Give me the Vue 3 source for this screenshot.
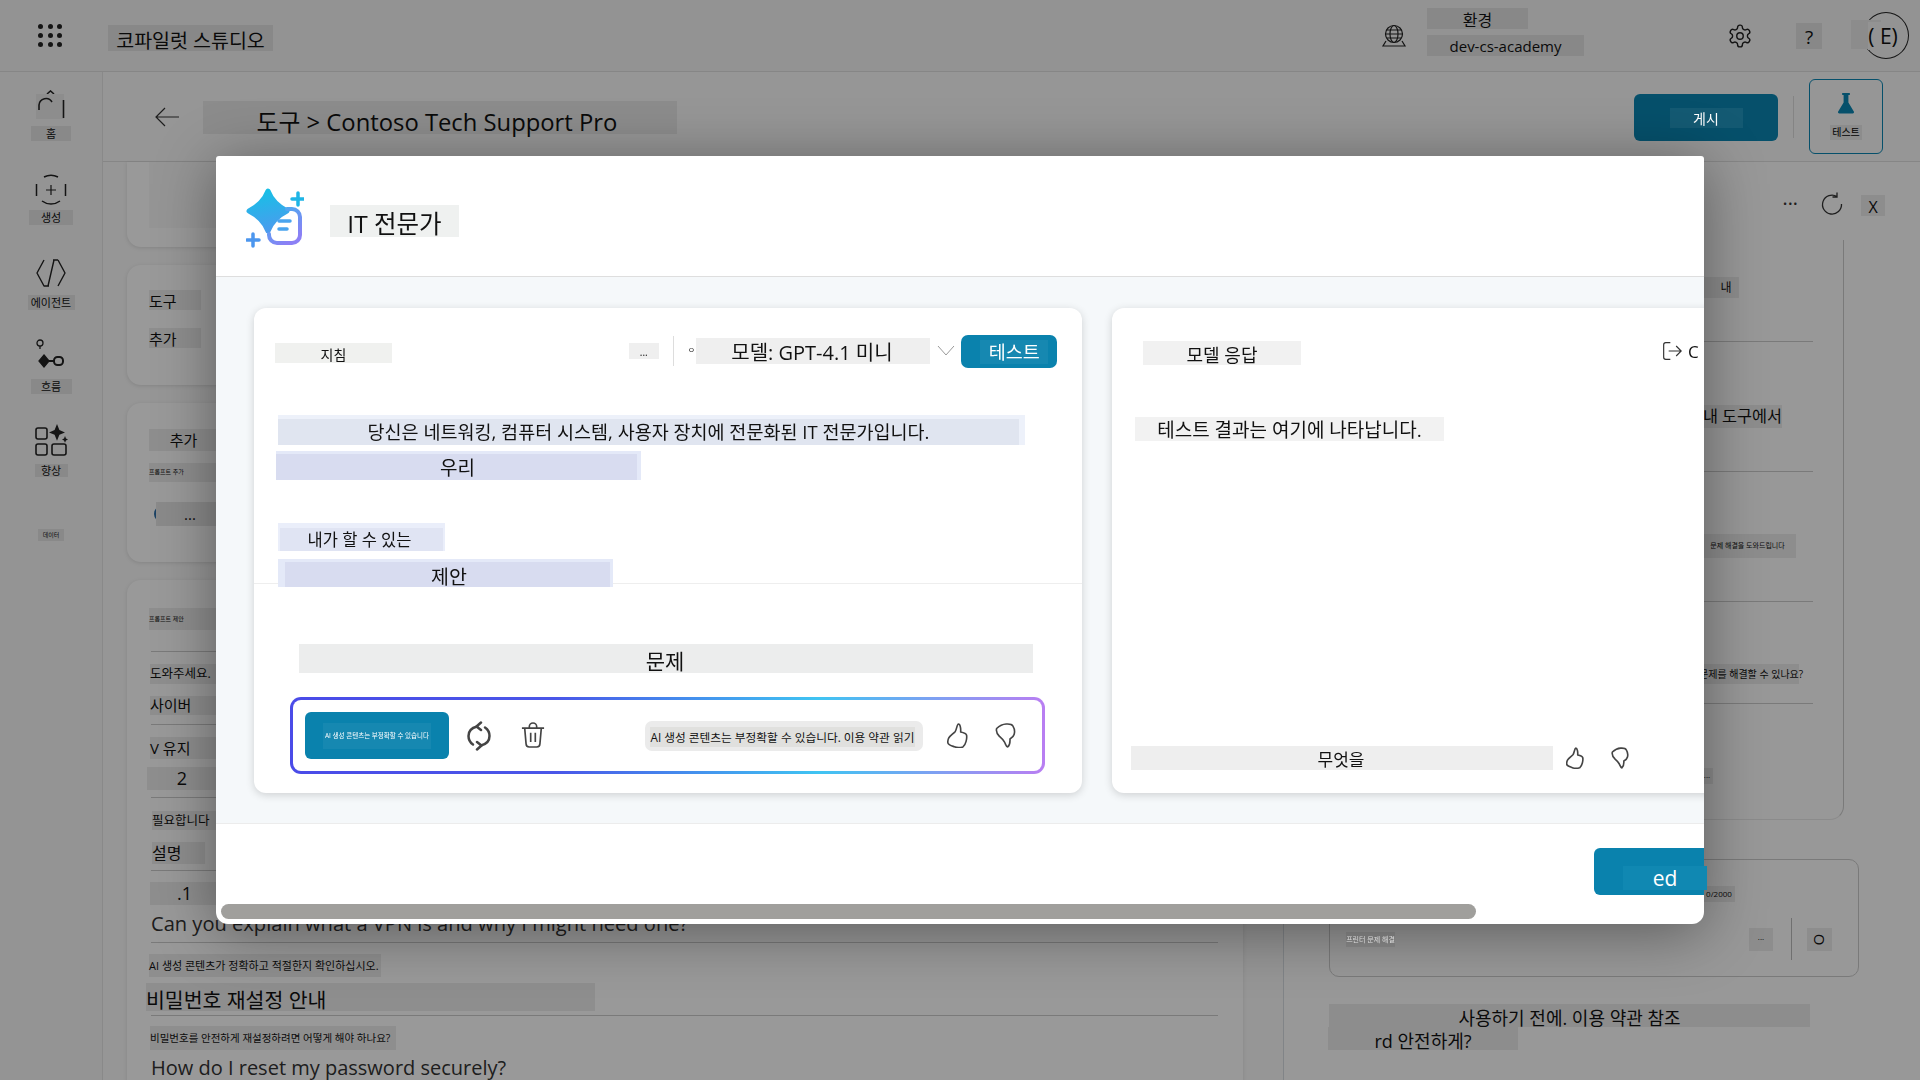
<template>
  <div class="page">
    <header class="topbar">
      <div class="dots"><i v-for="n in 9" :key="n"></i></div>
      <span class="hl app-name">코파일럿 스튜디오</span>
      <svg class="globe" viewBox="0 0 26 24" fill="none" stroke="#222" stroke-width="1.2">
        <circle cx="13" cy="10" r="8.5" />
        <ellipse cx="13" cy="10" rx="4" ry="8.5" />
        <path d="M4.5 10h17M5.5 6h15M5.5 14h15M5 17l-3 5h22l-3-5" />
      </svg>
      <div class="env">
        <span class="hl env-a">환경</span>
        <span class="hl env-b">dev-cs-academy</span>
      </div>
      <svg class="gear" viewBox="0 0 24 24" fill="none" stroke="#222" stroke-width="1.3">
        <path d="M12.22 2h-.44a2 2 0 0 0-2 2v.18a2 2 0 0 1-1 1.73l-.43.25a2 2 0 0 1-2 0l-.15-.08a2 2 0 0 0-2.73.73l-.22.38a2 2 0 0 0 .73 2.73l.15.1a2 2 0 0 1 1 1.72v.51a2 2 0 0 1-1 1.74l-.15.09a2 2 0 0 0-.73 2.73l.22.38a2 2 0 0 0 2.73.73l.15-.08a2 2 0 0 1 2 0l.43.25a2 2 0 0 1 1 1.73V20a2 2 0 0 0 2 2h.44a2 2 0 0 0 2-2v-.18a2 2 0 0 1 1-1.73l.43-.25a2 2 0 0 1 2 0l.15.08a2 2 0 0 0 2.73-.73l.22-.39a2 2 0 0 0-.73-2.73l-.15-.08a2 2 0 0 1-1-1.74v-.5a2 2 0 0 1 1-1.74l.15-.09a2 2 0 0 0 .73-2.73l-.22-.38a2 2 0 0 0-2.73-.73l-.15.08a2 2 0 0 1-2 0l-.43-.25a2 2 0 0 1-1-1.73V4a2 2 0 0 0-2-2z" />
        <circle cx="12" cy="12" r="3" />
      </svg>
      <span class="hl help">?</span>
      <div class="avatar"><span class="hl avatar-chip"></span><span class="avatar-text">( E)</span></div>
    </header>

    <div class="shell">
      <nav class="sidebar">
        <div class="nav-item home">
          <svg viewBox="0 0 34 32" fill="none" stroke="#222" stroke-width="1.6">
            <path d="M13 4l3.500-3 3.500 3" />
            <rect x="2" y="4" width="28" height="25" fill="#ececec" stroke="none" />
            <path d="M18 12a7 7 0 0 0-13 3v5M29.500 10v18" />
          </svg>
          <span class="hl nav-label l-home">홈</span>
        </div>
        <div class="nav-item create">
          <svg viewBox="0 0 34 32" fill="none" stroke="#222" stroke-width="1.5">
            <path d="M10 3a15 15 0 0 1 14 0M2.500 10v12M31.500 10v12M8 27a15 15 0 0 0 18 0" />
            <path d="M17 11v10M12 16h10" stroke-width="1.2" />
          </svg>
          <span class="hl nav-label l-create">생성</span>
        </div>
        <div class="nav-item agent">
          <svg viewBox="0 0 34 32" fill="none" stroke="#222" stroke-width="1.4" stroke-linejoin="round">
            <path d="M10 3L3 16l7 13h5M24 3h-5M24 3l7 13-7 13M20 3l-6 26" />
          </svg>
          <span class="hl nav-label l-agent">에이전트</span>
        </div>
        <div class="nav-item flow">
          <svg viewBox="0 0 34 34" fill="none" stroke="#222" stroke-width="1.3">
            <circle cx="6" cy="5" r="3" />
            <path d="M6 8v3" />
            <path d="M10 17l5 6-5 6-5-6z" fill="#222" />
            <path d="M15 23h5" stroke-width="2" />
            <rect x="20" y="19" width="9" height="8" rx="3.500" stroke-width="2" />
          </svg>
          <span class="hl nav-label l-flow">흐름</span>
        </div>
        <div class="nav-item improve">
          <svg viewBox="0 0 34 34" fill="none" stroke="#222" stroke-width="1.6">
            <rect x="2" y="5" width="11" height="11" rx="2" />
            <rect x="2" y="21" width="11" height="11" rx="2" />
            <rect x="18" y="21" width="14" height="11" rx="2" />
            <path d="M23 1l2.400 6 5.600 2.400-5.600 2.400-2.400 6-2.400-6-5.600-2.400 5.600-2.400z" fill="#222" stroke="none" />
            <path d="M31 13l1 2.400 2 1-2 1-1 2.400-1-2.400-2-1 2-1z" fill="#222" stroke="none" />
          </svg>
          <span class="hl nav-label l-improve">향상</span>
        </div>
        <span class="hl nav-small">데이터</span>
      </nav>

      <main class="main">
        <div class="subheader">
          <svg class="back" viewBox="0 0 24 20" fill="none" stroke="#333" stroke-width="1.2">
            <path d="M24 10H1M10 1l-9 9 9 9" />
          </svg>
          <span class="hl crumb">도구 &gt; Contoso Tech Support Pro</span>
          <button class="publish"><span class="publish-chip">게시</span></button>
          <span class="sub-sep"></span>
          <button class="test-tab">
            <svg viewBox="0 0 20 24" fill="#0a86b3">
              <path d="M6 1h8v2h-1.500v8l5.500 9a1.500 1.500 0 0 1-1.300 2.500H3.300A1.500 1.500 0 0 1 2 20l5.500-9V3H6z" />
            </svg>
            <span class="hl test-tab-label">테스트</span>
          </button>
        </div>

        <div class="columns">
          <section class="left-col">
            <div class="bg-card c1"><div class="c1-inner"></div></div>
            <div class="bg-card c2">
              <span class="hl c2-a">도구</span>
              <span class="hl c2-b">추가</span>
            </div>
            <div class="bg-card c3">
              <span class="hl c3-a">추가</span>
              <span class="hl c3-b">프롬프트 추가</span>
              <div class="c3-c"><span class="ring"></span><span class="hl c3-chip">...</span></div>
            </div>
            <div class="bg-card c4">
              <span class="hl q q1">프롬프트 제안</span>
              <hr class="ln l1" />
              <span class="hl q q2">도와주세요.</span>
              <span class="hl q q3">사이버</span>
              <hr class="ln l2" />
              <span class="hl q q4">V 유지</span>
              <span class="hl q q5">2</span>
              <hr class="ln l3" />
              <span class="hl q q6">필요합니다</span>
              <span class="hl q q7">설명</span>
              <hr class="ln l4" />
              <span class="hl q q8">.1</span>
              <p class="en e1">Can you explain what a VPN is and why I might need one?</p>
              <hr class="ln l5" />
              <span class="hl q q9">AI 생성 콘텐츠가 정확하고 적절한지 확인하십시오.</span>
              <span class="hl q q10">비밀번호 재설정 안내</span>
              <hr class="ln l6" />
              <span class="hl q q11">비밀번호를 안전하게 재설정하려면 어떻게 해야 하나요?</span>
              <p class="en e2">How do I reset my password securely?</p>
            </div>
          </section>

          <aside class="right-col">
            <div class="right-tools">
              <span class="more">•••</span>
              <svg class="reload" viewBox="0 0 24 24" fill="none" stroke="#333" stroke-width="1.3">
                <path d="M17 4.500A9.500 9.500 0 1 0 21.500 12M17 .5v4.500h-4.500" />
              </svg>
              <span class="hl close-x">X</span>
            </div>
            <div class="right-panel">
              <span class="hl rp rp1">내</span>
              <hr class="rl r1" />
              <span class="hl rp rp2">내 도구에서</span>
              <hr class="rl r2" />
              <span class="hl rp rp3">문제 해결을 도와드립니다</span>
              <hr class="rl r3" />
              <span class="hl rp rp4">문제를 해결할 수 있나요?</span>
              <hr class="rl r4" />
              <span class="hl rp rp5">...</span>
            </div>
            <div class="prompt-box">
              <span class="hl count">0/2000</span>
              <div class="prompt-row">
                <span class="hl prompt-label"><b>프린터 문제 해결</b></span>
                <span class="hl prompt-more">...</span>
                <span class="prompt-sep"></span>
                <span class="hl prompt-zero"><b>O</b></span>
              </div>
            </div>
            <span class="hl foot foot1">사용하기 전에. 이용 약관 참조</span>
            <span class="hl foot foot2">rd 안전하게?</span>
          </aside>
        </div>
      </main>
    </div>

    <div class="scrim"></div>

    <div class="modal">
      <div class="modal-head">
        <svg class="logo" viewBox="0 0 58 60">
          <defs>
            <linearGradient id="logoA" x1="0.4" y1="0" x2="0.6" y2="1">
              <stop offset="0" stop-color="#18bfe6" />
              <stop offset="1" stop-color="#4b9bee" />
            </linearGradient>
            <linearGradient id="logoB" x1="0" y1="0" x2="0.6" y2="1">
              <stop offset="0" stop-color="#3fb2ee" />
              <stop offset="1" stop-color="#8b80f5" />
            </linearGradient>
          </defs>
          <path d="M22 3Q27 16 41 23Q27 30 22 43Q17 30 3 23Q17 16 22 3z" fill="url(#logoA)" stroke="url(#logoA)" stroke-width="5" stroke-linejoin="round" />
          <path d="M41 21h5a8 8 0 0 1 8 8v18a8 8 0 0 1-8 8H31a8 8 0 0 1-8-8v-1" fill="none" stroke="url(#logoB)" stroke-width="4" stroke-linecap="round" />
          <path d="M33 33h11M33 41h8" fill="none" stroke="#4aa4ee" stroke-width="3.500" stroke-linecap="round" />
          <path d="M52 5v12M46 11h12" fill="none" stroke="#1fb5e6" stroke-width="3.500" stroke-linecap="round" />
          <path d="M7 46v12M1 52h12" fill="none" stroke="#4c96ee" stroke-width="3.500" stroke-linecap="round" />
        </svg>
        <span class="title-chip">IT 전문가</span>
      </div>

      <div class="modal-body">
        <section class="card left-card">
          <div class="card-head">
            <span class="chip head-chip">지침</span>
            <span class="chip dots-chip">...</span>
            <span class="head-sep"></span>
            <span class="cut-char">ㅇ</span>
            <span class="chip model-chip">모델: GPT-4.1 미니</span>
            <svg class="chev" viewBox="0 0 18 11" fill="none" stroke="#999" stroke-width="1">
              <path d="M1 1l8 9 8-9" />
            </svg>
            <button class="test-btn"><span>테스트</span></button>
          </div>
          <div class="instructions">
            <div class="ins ins1">당신은 네트워킹, 컴퓨터 시스템, 사용자 장치에 전문화된 IT 전문가입니다.</div>
            <div class="ins ins2">우리</div>
            <div class="ins ins3">내가 할 수 있는</div>
            <div class="ins ins4">제안</div>
          </div>
          <div class="prompt-area">
            <div class="problem">문제</div>
            <div class="grad">
              <button class="gen-btn"><span>AI 생성 콘텐츠는 부정확할 수 있습니다</span></button>
              <svg class="ic-refresh" viewBox="0 0 24 30" fill="none" stroke="#444" stroke-width="2.500" stroke-linecap="round" stroke-linejoin="round">
                <path d="M10 5.500C4 7 1.500 11 1.500 15c0 3.500 1.500 6.500 4.500 8.500M14 24.500c6-1.500 8.500-5.500 8.500-9.500 0-3.500-1.500-6.500-4.500-8.500" />
                <path d="M14 1.500L9.500 5.500l4.500 3.500M10 21l4.500 3.500-4.500 4" />
              </svg>
              <svg class="ic-trash" viewBox="0 0 26 28" fill="none" stroke="#444" stroke-width="1.800">
                <path d="M1 6h24M9 6V4.500a4 4 0 0 1 8 0V6M4 6l1.500 17a3.500 3.500 0 0 0 3.500 3.500h8a3.500 3.500 0 0 0 3.500-3.500L22 6M10.500 11v10M15.500 11v10" />
              </svg>
              <div class="disclaimer"><span>AI 생성 콘텐츠는 부정확할 수 있습니다. 이용 약관 읽기</span></div>
              <svg class="ic-up" viewBox="0 0 22 26" fill="none" stroke="#444" stroke-width="1.700" stroke-linejoin="round">
                <path d="M12 1c1.800 0 2.600 4.500 2.300 8.300 3 .6 5.700 1.200 6.200 3.400.6 3-.7 10-3.800 12.300-2.500.7-7 .6-9-.2C5.500 24 1.500 23 1 21c-.5-2.200.1-4 1-5.700 1.500-2.200 5-4.500 6.700-6.600C10 6.800 10.500 1.200 12 1z" />
              </svg>
              <svg class="ic-down" viewBox="0 0 22 26" fill="none" stroke="#444" stroke-width="1.700" stroke-linejoin="round">
                <path d="M1.700 5.700C4 3.500 8 1.200 11.700 1c3-.2 6 0 7 2 1.500 2.500 2.300 6 1.300 9-.5 2-2.500 3.700-4.300 4.700 0 2.500.5 6-2.400 8.300-1.800-.3-2.300-3.300-3.300-5-1.200-2-3-4-5-5.700C3.200 12.500.5 10 1.700 5.700z" />
              </svg>
            </div>
          </div>
        </section>

        <section class="card right-card">
          <div class="rc-head">
            <span class="chip rc-title">모델 응답</span>
            <svg class="ic-exit" viewBox="0 0 24 24" fill="none" stroke="#333" stroke-width="1.400">
              <path d="M10 2H4.500A2.500 2.500 0 0 0 2 4.500v15A2.500 2.500 0 0 0 4.500 22H10M8 12h15M17 6l6 6-6 6" />
            </svg>
            <span class="cut-c">C</span>
          </div>
          <div class="chip rc-result">테스트 결과는 여기에 나타납니다.</div>
          <div class="rc-foot">
            <span class="chip rc-what">무엇을</span>
            <svg class="ic-up small" viewBox="0 0 22 26" fill="none" stroke="#444" stroke-width="2" stroke-linejoin="round">
              <path d="M12 1c1.800 0 2.600 4.500 2.300 8.300 3 .6 5.700 1.200 6.200 3.400.6 3-.7 10-3.800 12.300-2.500.7-7 .6-9-.2C5.500 24 1.500 23 1 21c-.5-2.200.1-4 1-5.700 1.500-2.200 5-4.500 6.700-6.600C10 6.800 10.500 1.200 12 1z" />
            </svg>
            <svg class="ic-down small" viewBox="0 0 22 26" fill="none" stroke="#444" stroke-width="2" stroke-linejoin="round">
              <path d="M1.700 5.700C4 3.500 8 1.200 11.700 1c3-.2 6 0 7 2 1.500 2.500 2.300 6 1.300 9-.5 2-2.500 3.700-4.300 4.700 0 2.500.5 6-2.400 8.300-1.800-.3-2.300-3.300-3.300-5-1.200-2-3-4-5-5.700C3.200 12.500.5 10 1.700 5.700z" />
            </svg>
          </div>
        </section>
      </div>

      <div class="modal-foot">
        <button class="ed-btn"><span>ed</span></button>
      </div>
      <div class="hscroll"></div>
    </div>
  </div>
</template>

<script setup>
</script>

<style>
html, body {
  margin: 0;
  background: #fff;
}
</style>

<style scoped>
.page {
  width: 1920px;
  height: 1080px;
  overflow: hidden;
  position: relative;
  background: #fafafa;
  font-family: "Open Sans", "Noto Sans CJK KR", sans-serif;
  color: #111;
}

.hl {
  display: block;
  background: rgba(0, 0, 0, 0.07);
  text-align: center;
  white-space: nowrap;
}

.topbar {
  height: 72px;
  box-sizing: border-box;
  border-bottom: 1px solid #e0e0e0;
  background: #f5f5f5;
  display: flex;
  align-items: center;
}

.dots {
  margin-left: 38px;
  width: 24px;
  display: grid;
  grid-template-columns: repeat(3, 5px);
  gap: 4px 4.500px;
}

.dots i {
  width: 5px;
  height: 5px;
  border-radius: 50%;
  background: #222;
}

.app-name {
  margin-left: 46px;
  width: 165px;
  height: 26px;
  line-height: 31px;
  font-size: 19.500px;
  margin-top: 4px;
}

.globe {
  margin-left: 1108px;
  width: 26px;
  height: 24px;
}

.env {
  margin-left: 20px;
  display: flex;
  flex-direction: column;
  gap: 6px;
  margin-top: -8px;
}

.env-a {
  width: 101px;
  height: 21px;
  line-height: 25px;
  font-size: 16px;
}

.env-b {
  width: 157px;
  height: 21px;
  line-height: 22px;
  font-size: 15px;
}

.gear {
  margin-left: 143px;
  width: 26px;
  height: 26px;
}

.help {
  margin-left: 43px;
  width: 26px;
  height: 26px;
  line-height: 28px;
  font-size: 19px;
}

.avatar {
  margin-left: 41px;
  width: 46px;
  height: 47px;
  box-sizing: border-box;
  border: 1px solid #222;
  border-radius: 50%;
  position: relative;
  display: flex;
  align-items: center;
  justify-content: center;
}

.avatar-chip {
  position: absolute;
  left: -13px;
  top: 7px;
  width: 30px;
  height: 29px;
  background: #e9e9e9;
}

.avatar-text {
  position: relative;
  margin-left: -6px;
  font-size: 21px;
  background: #f5f5f5;
  white-space: pre;
  line-height: 28px;
}

.shell {
  display: flex;
  height: 1008px;
}

.sidebar {
  width: 103px;
  flex: none;
  box-sizing: border-box;
  border-right: 1px solid #e4e4e4;
  background: #f7f7f7;
  display: flex;
  flex-direction: column;
  align-items: center;
  padding-top: 18px;
}

.nav-item {
  display: flex;
  flex-direction: column;
  align-items: center;
  box-sizing: border-box;
}

.nav-item svg {
  width: 34px;
  height: 32px;
}

.nav-label {
  font-size: 11px;
  height: 15px;
  line-height: 15px;
}

.home {
  height: 78px;
}

.l-home {
  width: 40px;
  margin-top: 4px;
}

.create {
  height: 83px;
  padding-top: 6px;
}

.l-create {
  width: 44px;
  margin-top: 4px;
}

.agent {
  height: 85px;
  padding-top: 6px;
}

.l-agent {
  width: 47px;
  margin-top: 6px;
}

.flow {
  height: 81px;
  padding-top: 2px;
}

.flow svg {
  height: 34px;
}

.l-flow {
  width: 41px;
  margin-top: 7px;
}

.improve {
  height: 112px;
  padding-top: 6px;
}

.improve svg {
  height: 34px;
}

.l-improve {
  width: 33px;
  margin-top: 7px;
  height: 13px;
  line-height: 13px;
}

.nav-small {
  width: 26px;
  height: 12px;
  line-height: 12px;
  font-size: 6px;
}

.main {
  flex: 1;
  min-width: 0;
  display: flex;
  flex-direction: column;
}

.subheader {
  height: 90px;
  flex: none;
  box-sizing: border-box;
  border-bottom: 1px solid #e0e0e0;
  display: flex;
  align-items: center;
  background: #fbfbfb;
}

.back {
  margin-left: 52px;
  width: 24px;
  height: 20px;
}

.crumb {
  margin-left: 24px;
  width: 474px;
  height: 33px;
  line-height: 42px;
  font-size: 23.800px;
  padding-right: 6px;
  box-sizing: border-box;
  margin-top: 2px;
}

.publish {
  margin-left: 957px;
  width: 144px;
  height: 47px;
  border: none;
  border-radius: 6px;
  background: #0a86b3;
  padding: 0;
  margin-top: 2px;
}

.publish-chip {
  display: block;
  position: relative;
  z-index: 2;
  margin: 0 auto;
  width: 73px;
  height: 20px;
  line-height: 22px;
  background: rgba(255, 255, 255, 0.06);
  color: #fff;
  font-size: 14px;
  font-family: "Open Sans", "Noto Sans CJK KR", sans-serif;
}

.sub-sep {
  margin-left: 15px;
  width: 1px;
  height: 42px;
  background: #ddd;
}

.test-tab {
  margin-left: 15px;
  width: 74px;
  height: 75px;
  box-sizing: border-box;
  border: 1px solid #0a86b3;
  border-radius: 6px;
  background: transparent;
  padding: 12px 0 0;
  display: flex;
  flex-direction: column;
  align-items: center;
}

.test-tab svg {
  width: 20px;
  height: 23px;
}

.test-tab-label {
  margin-top: 10px;
  width: 32px;
  height: 15px;
  line-height: 15px;
  font-size: 10px;
  font-family: "Open Sans", "Noto Sans CJK KR", sans-serif;
}

.columns {
  flex: 1;
  display: flex;
  min-height: 0;
}

.left-col {
  margin-left: 24px;
  width: 1116px;
  flex: none;
  display: flex;
  flex-direction: column;
  gap: 18px;
}

.bg-card {
  box-sizing: border-box;
  background: #fff;
  border-radius: 14px;
  box-shadow: 0 1px 4px rgba(0, 0, 0, 0.12);
  padding-left: 22px;
  flex: none;
}

.c1 {
  height: 85px;
  border-radius: 0 0 14px 14px;
}

.c1-inner {
  height: 66px;
  background: #f8f8f8;
}

.c2 {
  height: 120px;
  padding-top: 25px;
}

.c2-a {
  width: 52px;
  height: 20px;
  line-height: 22px;
  font-size: 15px;
  text-align: left;
}

.c2-b {
  width: 52px;
  height: 20px;
  line-height: 22px;
  font-size: 15px;
  margin-top: 18px;
  text-align: left;
}

.c3 {
  height: 159px;
  padding-top: 26px;
}

.c3-a {
  width: 69px;
  height: 22px;
  line-height: 23px;
  font-size: 15px;
}

.c3-b {
  width: 67px;
  height: 19px;
  line-height: 19px;
  font-size: 6px;
  margin-top: 12px;
  text-align: left;
}

.c3-c {
  margin-top: 23px;
  display: flex;
  align-items: center;
  position: relative;
  margin-left: 5px;
}

.ring {
  width: 18px;
  height: 18px;
  box-sizing: border-box;
  border: 2px solid #2d6fa8;
  border-radius: 50%;
}

.c3-chip {
  position: absolute;
  left: 2px;
  top: -3px;
  width: 62px;
  height: 24px;
  line-height: 24px;
  font-size: 15px;
  background: #e6e6e6;
  padding-left: 6px;
  box-sizing: border-box;
}

.c4 {
  height: 520px;
  padding-top: 28px;
  padding-right: 25px;
  border-radius: 14px 14px 0 0;
}

.q {
  width: 67px;
  height: 20px;
  line-height: 20px;
  margin-left: 1px;
  text-align: left;
}

.ln {
  margin: 0 0 0 2px;
  border: none;
  border-top: 1px solid #ccc;
}

.q1 {
  margin-left: 0;
  width: 72px;
  height: 22px;
  line-height: 22px;
  font-size: 6px;
}

.l1 {
  margin-top: 21px;
}

.q2 {
  margin-top: 12px;
  font-size: 12.500px;
}

.q3 {
  margin-top: 12px;
  height: 19px;
  line-height: 19px;
  font-size: 15px;
}

.l2 {
  margin-top: 9px;
}

.q4 {
  margin-top: 12px;
  height: 22px;
  line-height: 22px;
  font-size: 15px;
}

.q5 {
  margin-top: 8px;
  margin-left: -2px;
  width: 70px;
  height: 23px;
  line-height: 23px;
  font-size: 18px;
  text-align: center;
}

.l3 {
  margin-top: 7px;
}

.q6 {
  margin-top: 13px;
  margin-left: 3px;
  width: 64px;
  height: 19px;
  line-height: 19px;
  font-size: 12.500px;
}

.q7 {
  margin-top: 12px;
  margin-left: 3px;
  width: 53px;
  height: 22px;
  line-height: 22px;
  font-size: 16px;
}

.l4 {
  margin-top: 6px;
}

.q8 {
  margin-top: 11px;
  width: 69px;
  height: 23px;
  line-height: 23px;
  font-size: 18px;
  text-align: center;
}

.en {
  margin: 4px 0 0 2px;
  height: 30px;
  line-height: 30px;
  font-size: 20.100px;
  color: #333;
  white-space: nowrap;
}

.l5 {
  margin-top: 3px;
}

.q9 {
  margin-top: 11px;
  width: 232px;
  height: 23px;
  line-height: 23px;
  font-size: 11px;
  margin-left: 0;
}

.q10 {
  margin-top: 6px;
  margin-left: -3px;
  width: 449px;
  height: 28px;
  line-height: 35px;
  font-size: 20.500px;
}

.l6 {
  margin-top: 4px;
}

.q11 {
  margin-top: 10px;
  width: 246px;
  height: 24px;
  line-height: 24px;
  font-size: 10.500px;
}

.e2 {
  margin-top: 3px;
  font-size: 20px;
}

.right-col {
  margin-left: 40px;
  flex: 1;
  min-width: 0;
  box-sizing: border-box;
  border-left: 1px solid #d8dde2;
  background: #fdfdfd;
  padding-left: 45px;
}

.right-tools {
  height: 78px;
  position: relative;
}

.more {
  position: absolute;
  left: 454px;
  top: 34px;
  font-size: 11px;
  letter-spacing: 1px;
  color: #333;
}

.reload {
  position: absolute;
  left: 491px;
  top: 30px;
  width: 24px;
  height: 24px;
}

.close-x {
  position: absolute;
  left: 532px;
  top: 33px;
  width: 24px;
  height: 21px;
  line-height: 24px;
  font-size: 16px;
}

.right-panel {
  width: 515px;
  height: 580px;
  box-sizing: border-box;
  border-right: 1px solid #ccc;
  border-bottom: 1px solid #e8e8e8;
  border-radius: 0 0 14px 0;
  position: relative;
}

.rp {
  position: absolute;
  font-size: 16px;
}

.rl {
  margin: 0;
  border: none;
  border-top: 1px solid #ccc;
  position: absolute;
  left: 0;
  width: 484px;
}

.r1 {
  top: 101px;
}

.r2 {
  top: 231px;
}

.r3 {
  top: 361px;
}

.r4 {
  top: 463px;
}

.rp1 {
  left: 370px;
  top: 37px;
  width: 40px;
  height: 21px;
  line-height: 21px;
  font-size: 12px;
  padding-left: 14px;
  box-sizing: border-box;
}

.rp2 {
  left: 372px;
  top: 165px;
  width: 81px;
  height: 23px;
  line-height: 23px;
  text-align: right;
  font-size: 16.300px;
}

.rp3 {
  left: 370px;
  top: 294px;
  width: 97px;
  height: 24px;
  line-height: 24px;
  font-size: 7px;
}

.rp4 {
  left: 370px;
  top: 424px;
  width: 100px;
  height: 20px;
  line-height: 20px;
  font-size: 10px;
  text-align: center;
}

.rp5 {
  left: 372px;
  top: 528px;
  width: 12px;
  height: 16px;
  line-height: 14px;
  font-size: 8px;
}

.prompt-box {
  margin-top: 39px;
  width: 530px;
  height: 118px;
  box-sizing: border-box;
  border: 1px solid #ccc;
  border-radius: 10px;
  position: relative;
}

.count {
  position: absolute;
  left: 373px;
  top: 26px;
  width: 32px;
  height: 16px;
  line-height: 16px;
  font-size: 8px;
}

.prompt-row {
  position: absolute;
  left: 16px;
  top: 58px;
  right: 26px;
  height: 42px;
  display: flex;
  align-items: center;
}

.prompt-label {
  width: 49px;
  height: 15px;
  line-height: 15px;
  font-size: 7px;
  color: #fff;
}

.prompt-label b {
  position: relative;
  z-index: 2;
  font-weight: 400;
}

.prompt-more {
  margin-left: 354px;
  width: 24px;
  height: 23px;
  line-height: 18px;
  font-size: 8px;
}

.prompt-sep {
  margin-left: 18px;
  width: 1px;
  height: 42px;
  background: #bbb;
}

.prompt-zero {
  margin-left: 15px;
  width: 25px;
  height: 23px;
  line-height: 23px;
  font-size: 15px;
}

.prompt-zero b {
  display: inline-block;
  font-weight: 400;
  transform: rotate(90deg);
}

.foot {
  font-size: 18px;
  height: 23px;
  line-height: 28px;
}

.foot1 {
  margin-top: 27px;
  width: 481px;
}

.foot2 {
  margin-left: -1px;
  width: 190px;
}

.scrim {
  position: fixed;
  inset: 0;
  z-index: 1;
  background: rgba(0, 0, 0, 0.4);
}

.modal {
  position: fixed;
  z-index: 10;
  left: 216px;
  top: 156px;
  width: 1488px;
  height: 768px;
  background: #fff;
  border-radius: 3px 3px 12px 12px;
  box-shadow: 0 8px 60px rgba(0, 0, 0, 0.4);
  display: flex;
  flex-direction: column;
  color: #111;
}

.modal-head {
  height: 120px;
  flex: none;
  box-sizing: border-box;
  border-bottom: 1px solid #dedede;
  display: flex;
  align-items: center;
  margin-top: 1px;
}

.logo {
  margin-left: 30px;
  width: 58px;
  height: 60px;
  margin-top: 2px;
}

.title-chip {
  margin-left: 26px;
  width: 129px;
  height: 32px;
  line-height: 38px;
  background: #eff1f0;
  font-size: 24.500px;
  text-align: center;
  margin-top: 8px;
}

.modal-body {
  flex: none;
  height: 547px;
  box-sizing: border-box;
  background: #f5f8fa;
  border-bottom: 1px solid #ececec;
  padding: 31px 0 0 38px;
  display: flex;
  gap: 30px;
  overflow: hidden;
}

.card {
  flex: none;
  height: 485px;
  box-sizing: border-box;
  background: #fff;
  border-radius: 12px;
  box-shadow: 0 2px 8px rgba(0, 0, 0, 0.16);
}

.left-card {
  width: 828px;
}

.chip {
  display: block;
  background: #efefef;
  text-align: center;
  white-space: nowrap;
}

.card-head {
  height: 33px;
  padding: 27px 25px 0 21px;
  display: flex;
  align-items: flex-start;
}

.head-chip {
  width: 117px;
  height: 20px;
  line-height: 24px;
  font-size: 14px;
  margin-top: 8px;
  background: #f0f1ef;
}

.dots-chip {
  margin-left: 237px;
  width: 30px;
  height: 16px;
  line-height: 18px;
  font-size: 10px;
  margin-top: 8px;
}

.head-sep {
  margin-left: 14px;
  width: 1px;
  height: 30px;
  margin-top: 1px;
  background: #ddd;
}

.cut-char {
  margin-left: 14px;
  width: 8px;
  font-size: 8px;
  line-height: 30px;
}

.model-chip {
  width: 235px;
  height: 26px;
  line-height: 30px;
  font-size: 20px;
  margin-top: 3px;
  padding-right: 2px;
  box-sizing: border-box;
}

.chev {
  margin-left: 7px;
  width: 18px;
  height: 11px;
  margin-top: 10px;
}

.test-btn {
  margin-left: 6px;
  width: 96px;
  height: 33px;
  border: none;
  border-radius: 7px;
  background: #0a82ad;
  padding: 0;
}

.test-btn span {
  display: block;
  margin-left: 19px;
  width: 68px;
  height: 24px;
  line-height: 24px;
  background: rgba(255, 255, 255, 0.05);
  color: #fff;
  font-size: 18.500px;
  font-family: "Open Sans", "Noto Sans CJK KR", sans-serif;
}

.instructions {
  height: 168px;
  margin-top: 47px;
}

.ins {
  white-space: nowrap;
  text-align: center;
}

.ins1 {
  margin-left: 24px;
  width: 747px;
  height: 30px;
  line-height: 34px;
  font-size: 18.500px;
  padding-right: 6px;
  box-sizing: border-box;
  background: linear-gradient(#e0e5f0, #e0e5f0) 0 4px / 741px 26px no-repeat, #edf1fa;
}

.ins2 {
  margin-left: 22px;
  margin-top: 6px;
  width: 365px;
  height: 29px;
  line-height: 35px;
  font-size: 19px;
  padding-right: 2px;
  box-sizing: border-box;
  background: linear-gradient(#d8dcf0, #d8dcf0) 0 3px / 361px 26px no-repeat, #e4e9f8;
}

.ins3 {
  margin-left: 24px;
  margin-top: 43px;
  width: 167px;
  height: 28px;
  line-height: 34px;
  font-size: 16.500px;
  padding-right: 4px;
  box-sizing: border-box;
  background: linear-gradient(#e0e4f3, #e0e4f3) 2px 5px / 163px 23px no-repeat, #eaeefa;
}

.ins4 {
  margin-left: 24px;
  margin-top: 8px;
  width: 335px;
  height: 28px;
  line-height: 35px;
  font-size: 19.500px;
  padding-left: 7px;
  box-sizing: border-box;
  background: linear-gradient(#d8dcf0, #d8dcf0) 7px 3px / 325px 25px no-repeat, #e4e9f8;
  position: relative;
}

.prompt-area {
  border-top: 1px solid #eee;
  padding-top: 60px;
}

.problem {
  margin-left: 45px;
  width: 734px;
  height: 29px;
  line-height: 34px;
  background: #eceded;
  text-align: center;
  font-size: 21px;
  padding-right: 2px;
  box-sizing: border-box;
}

.grad {
  margin: 24px 0 0 36px;
  width: 755px;
  height: 77px;
  box-sizing: border-box;
  border: 3px solid transparent;
  border-radius: 11px;
  background:
    linear-gradient(#fff, #fff) padding-box,
    linear-gradient(90deg, #4a4be8 0%, #4a56e8 35%, #3fc4f2 70%, #b97ef2 100%) border-box;
  display: flex;
  align-items: center;
}

.gen-btn {
  margin-left: 12px;
  width: 144px;
  height: 47px;
  border: none;
  border-radius: 6px;
  background: #0a82ad;
  padding: 0;
  flex: none;
}

.gen-btn span {
  display: block;
  margin: 0 auto;
  width: 108px;
  height: 26px;
  line-height: 26px;
  background: rgba(255, 255, 255, 0.05);
  color: #fff;
  font-size: 6.500px;
  white-space: nowrap;
  font-family: "Open Sans", "Noto Sans CJK KR", sans-serif;
}

.ic-refresh {
  margin-left: 18px;
  width: 24px;
  height: 30px;
  flex: none;
}

.ic-trash {
  margin-left: 30px;
  width: 24px;
  height: 27px;
  flex: none;
}

.disclaimer {
  margin-left: 100px;
  width: 278px;
  height: 30px;
  flex: none;
  box-sizing: border-box;
  border-radius: 7px;
  background: #ebebeb;
  padding: 6px 8px 4px 5px;
}

.disclaimer span {
  display: block;
  height: 20px;
  line-height: 21px;
  background: #e0e0de;
  text-align: center;
  font-size: 11.700px;
  white-space: nowrap;
}

.ic-up {
  margin-left: 24px;
  width: 21px;
  height: 25px;
  flex: none;
}

.ic-down {
  margin-left: 27px;
  width: 21px;
  height: 25px;
  flex: none;
}

.right-card {
  width: 640px;
  padding: 33px 0 0 19px;
  display: flex;
  flex-direction: column;
}

.rc-head {
  display: flex;
  align-items: center;
  height: 24px;
}

.rc-title {
  margin-left: 12px;
  width: 158px;
  height: 24px;
  line-height: 28px;
  font-size: 18px;
  background: #f1f1f1;
}

.ic-exit {
  margin-left: 361px;
  width: 20px;
  height: 20px;
  flex: none;
  margin-top: -4px;
}

.cut-c {
  margin-left: 6px;
  font-size: 17px;
  margin-top: -4px;
}

.rc-result {
  margin-top: 52px;
  margin-left: 4px;
  width: 309px;
  height: 24px;
  line-height: 27px;
  font-size: 19px;
  background: #f2f2f2;
}

.rc-foot {
  margin-top: 305px;
  display: flex;
  align-items: center;
}

.rc-what {
  width: 422px;
  height: 24px;
  line-height: 28px;
  font-size: 17px;
  padding-right: 2px;
  box-sizing: border-box;
  background: #eee;
}

.ic-up.small {
  margin-left: 13px;
  width: 18px;
  height: 22px;
}

.ic-down.small {
  margin-left: 27px;
  width: 18px;
  height: 22px;
}

.modal-foot {
  flex: 1;
  display: flex;
  justify-content: flex-end;
  align-items: flex-start;
  padding-top: 24px;
}

.ed-btn {
  width: 110px;
  height: 47px;
  border: none;
  border-radius: 6px 0 0 6px;
  background: #0a82ad;
  padding: 12px 0 0;
  position: relative;
}

.ed-btn span {
  display: block;
  margin-left: 29px;
  width: 84px;
  height: 24px;
  line-height: 24px;
  background: #1088b2;
  color: #fff;
  font-size: 21px;
  text-align: center;
  font-family: "Open Sans", "Noto Sans CJK KR", sans-serif;
}

.hscroll {
  position: absolute;
  left: 5px;
  bottom: 5px;
  width: 1255px;
  height: 15px;
  border-radius: 8px;
  background: #a09f9c;
}
</style>
